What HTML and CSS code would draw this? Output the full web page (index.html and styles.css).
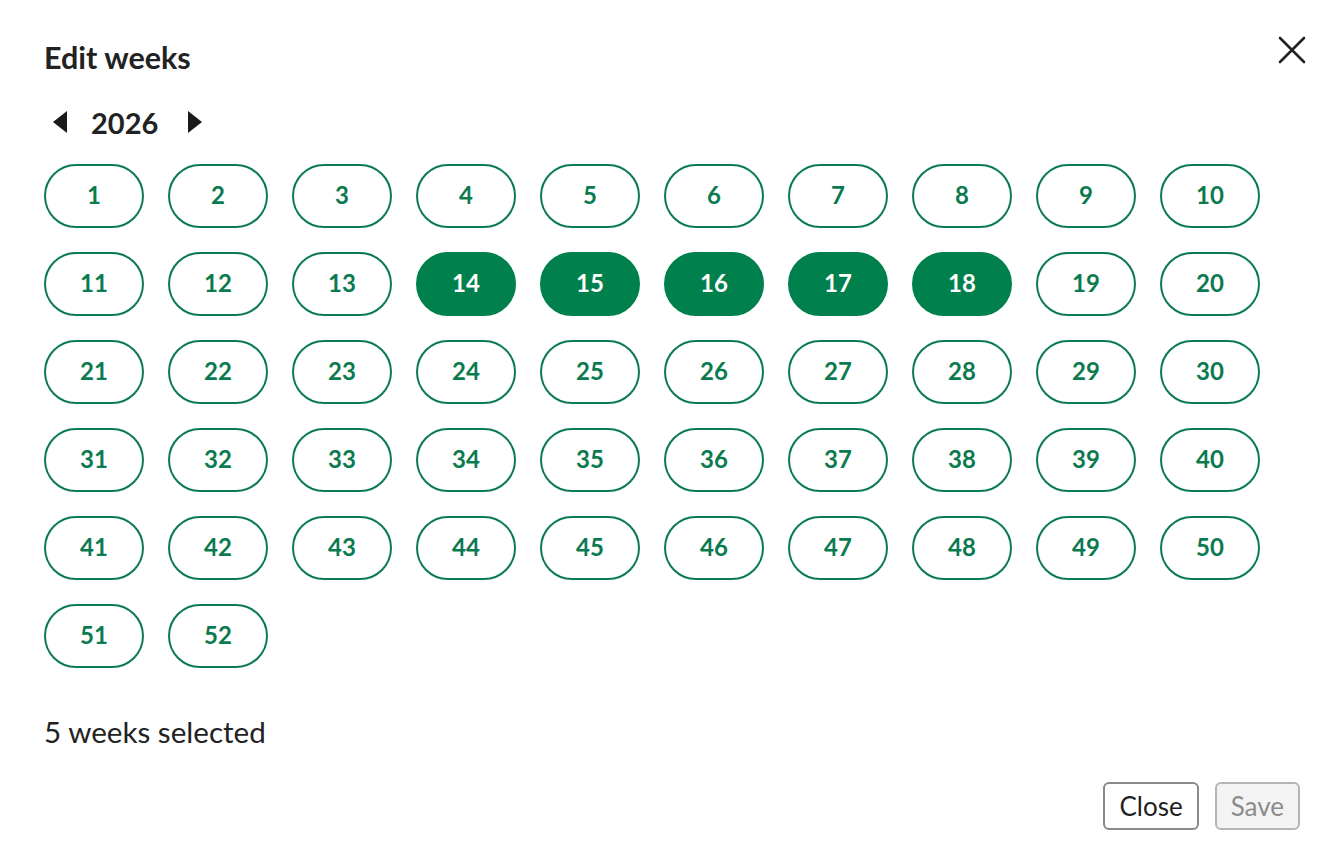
FILE: index.html
```html
<!DOCTYPE html>
<html>
<head>
<meta charset="utf-8">
<link rel="stylesheet" href="styles.css">
</head>
<body>
<div class="dialog">
  <div class="header">
    <h1 class="title">Edit weeks</h1>
    <button class="close-x" aria-label="Close">
      <svg width="28" height="28" viewBox="0 0 28 28"><path d="M2 2 L26 26 M26 2 L2 26" stroke="#222" stroke-width="2.6" stroke-linecap="round"/></svg>
    </button>
  </div>
  <div class="year-row">
    <button class="arrow"><svg width="16" height="24" viewBox="0 0 16 24"><path d="M15 1 L15 23 L1 12 Z" fill="#1a1a1a"/></svg></button>
    <span class="year">2026</span>
    <button class="arrow"><svg width="16" height="24" viewBox="0 0 16 24"><path d="M1 1 L1 23 L15 12 Z" fill="#1a1a1a"/></svg></button>
  </div>
  <div class="weeks">
    <button class="week">1</button><button class="week">2</button><button class="week">3</button><button class="week">4</button><button class="week">5</button><button class="week">6</button><button class="week">7</button><button class="week">8</button><button class="week">9</button><button class="week">10</button>
    <button class="week">11</button><button class="week">12</button><button class="week">13</button><button class="week sel">14</button><button class="week sel">15</button><button class="week sel">16</button><button class="week sel">17</button><button class="week sel">18</button><button class="week">19</button><button class="week">20</button>
    <button class="week">21</button><button class="week">22</button><button class="week">23</button><button class="week">24</button><button class="week">25</button><button class="week">26</button><button class="week">27</button><button class="week">28</button><button class="week">29</button><button class="week">30</button>
    <button class="week">31</button><button class="week">32</button><button class="week">33</button><button class="week">34</button><button class="week">35</button><button class="week">36</button><button class="week">37</button><button class="week">38</button><button class="week">39</button><button class="week">40</button>
    <button class="week">41</button><button class="week">42</button><button class="week">43</button><button class="week">44</button><button class="week">45</button><button class="week">46</button><button class="week">47</button><button class="week">48</button><button class="week">49</button><button class="week">50</button>
    <button class="week">51</button><button class="week">52</button>
  </div>
  <p class="summary">5 weeks selected</p>
  <div class="footer">
    <button class="btn">Close</button>
    <button class="btn disabled" disabled>Save</button>
  </div>
</div>
</body>
</html>
```

FILE: styles.css
```css
* { box-sizing: border-box; }
html, body { margin: 0; padding: 0; background: #fff; }
body { font-family: "Lato", "Noto Sans", sans-serif; color: #1f1f1f; }
button { font-family: inherit; cursor: pointer; }
.dialog { width: 1338px; height: 862px; padding: 30px 32px 0 44px; }
.header { display: flex; justify-content: space-between; align-items: flex-start; height: 66px; }
.title { margin: 0; padding-top: 9px; font-size: 30.5px; font-weight: 700; line-height: 36px; color: #222; }
.close-x { border: 0; background: none; padding: 0; margin-top: 6px; width: 28px; height: 28px; }
.close-x svg { display: block; }
.year-row { display: flex; align-items: center; height: 52px; margin-bottom: 16px; }
.arrow { border: 0; background: none; padding: 0; width: 16px; height: 24px; margin-left: 8px; }
.arrow svg { display: block; }
.year { font-size: 29px; font-weight: 700; margin: 0 21px 0 23px; color: #222; }
.weeks { display: grid; grid-template-columns: repeat(10, 100px); column-gap: 24px; row-gap: 24px; }
.week { height: 64px; border: 2px solid #0b7a4f; border-radius: 32px; background: #fff; color: #0b7a4f; font-size: 24px; font-weight: 700; padding: 0 0 3px; }
.week.sel { background: #00804c; border-color: #00804c; color: #fff; }
.summary { margin: 46px 0 0; font-size: 29.6px; line-height: 36px; color: #222; }
.footer { display: flex; justify-content: flex-end; gap: 16px; margin-top: 32px; padding-right: 6px; }
.btn { height: 48px; padding: 0 14px; font-size: 26px; border: 2px solid #8a8a8a; border-radius: 6px; background: #fff; color: #1f1f1f; }
.btn.disabled { background: #f3f3f3; color: #8c8c8c; border-color: #b5b5b5; cursor: default; }
```
